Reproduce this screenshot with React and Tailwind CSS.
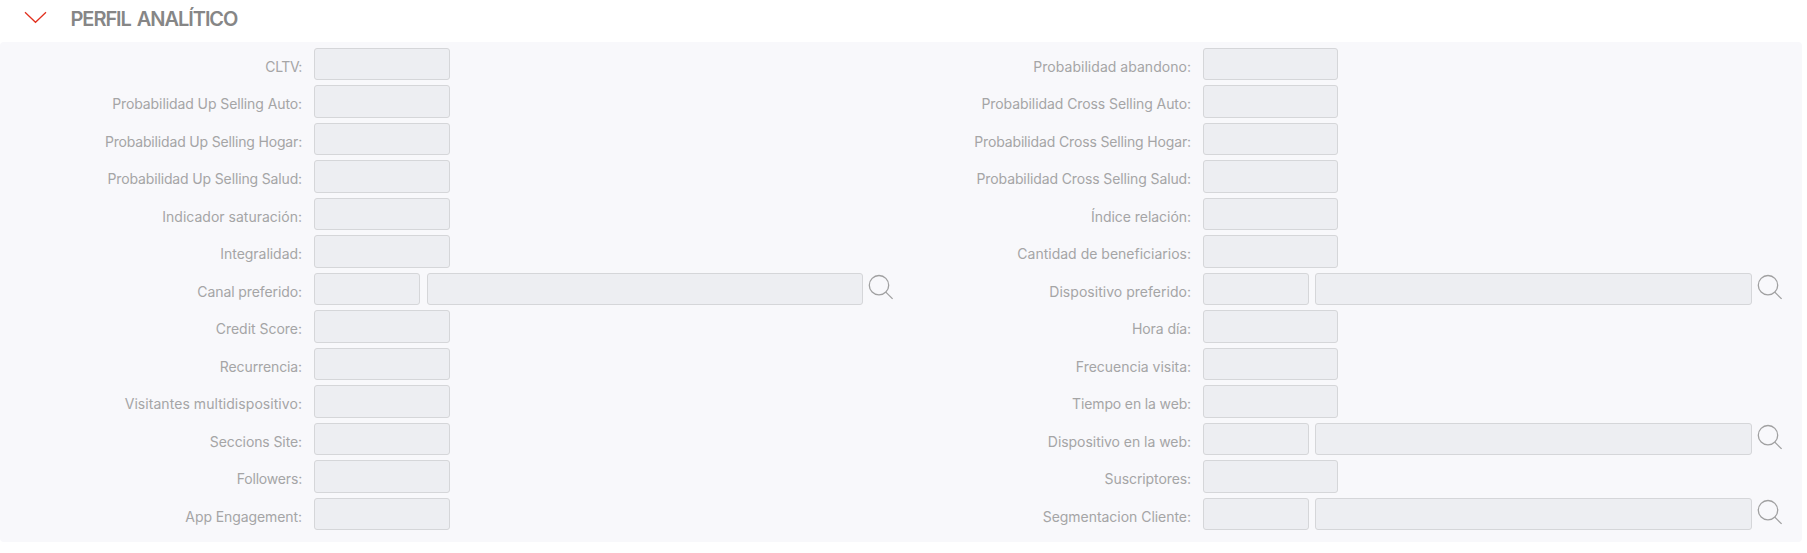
const LEFT = [
  { label: "CLTV:", tracking: "tracking-[-0.4px]" },
  { label: "Probabilidad Up Selling Auto:", tracking: "tracking-[-0.09px]" },
  { label: "Probabilidad Up Selling Hogar:", tracking: "tracking-[-0.17px]" },
  { label: "Probabilidad Up Selling Salud:", tracking: "tracking-[-0.145px]" },
  { label: "Indicador saturación:", tracking: "tracking-[0.01px]" },
  { label: "Integralidad:", tracking: "tracking-[-0.04px]" },
  { label: "Canal preferido:", tracking: "tracking-[-0.093px]", lookup: true },
  { label: "Credit Score:", tracking: "tracking-[-0.02px]" },
  { label: "Recurrencia:", tracking: "tracking-[-0.11px]" },
  { label: "Visitantes multidispositivo:", tracking: "tracking-[0.055px]" },
  { label: "Seccions Site:", tracking: "tracking-[-0.1px]" },
  { label: "Followers:", tracking: "tracking-[-0.18px]" },
  { label: "App Engagement:", tracking: "tracking-[-0.086px]" },
];

const RIGHT = [
  { label: "Probabilidad abandono:", tracking: "tracking-[0.03px]" },
  { label: "Probabilidad Cross Selling Auto:", tracking: "tracking-[-0.075px]" },
  { label: "Probabilidad Cross Selling Hogar:", tracking: "tracking-[-0.15px]" },
  { label: "Probabilidad Cross Selling Salud:", tracking: "tracking-[-0.115px]" },
  { label: "Índice relación:", tracking: "tracking-[-0.04px]" },
  { label: "Cantidad de beneficiarios:", tracking: "tracking-[0px]" },
  { label: "Dispositivo preferido:", tracking: "tracking-[0.025px]", lookup: true },
  { label: "Hora día:", tracking: "tracking-[-0.08px]" },
  { label: "Frecuencia visita:", tracking: "tracking-[-0.02px]" },
  { label: "Tiempo en la web:", tracking: "tracking-[-0.141px]" },
  { label: "Dispositivo en la web:", tracking: "tracking-[-0.04px]", lookup: true },
  { label: "Suscriptores:", tracking: "tracking-[-0.09px]" },
  { label: "Segmentacion Cliente:", tracking: "tracking-[-0.034px]", lookup: true },
];

function Field({ className }) {
  return (
    <input
      disabled
      className={`block h-[32.3px] shrink-0 rounded-[3px] border border-[#d5d6d9] bg-[#edeef2] ${className}`}
    />
  );
}

function SearchIcon() {
  return (
    <svg className="ml-[5px] mt-[1.1px] h-[26px] w-[26px] shrink-0" viewBox="0 0 26 26" fill="none" stroke="#a0a0a1" strokeWidth="1.3">
      <circle cx="11" cy="11.2" r="9.7" />
      <path d="M17.8 18.1 24.6 24.9" />
    </svg>
  );
}

function Row({ label, tracking, lookup, single, small, wide }) {
  return (
    <div className="flex h-[37.5px] items-start">
      <label className={`mt-[9px] w-[302px] shrink-0 whitespace-nowrap text-right text-sm leading-5 text-[#a5a5a6] ${tracking}`}>
        {label}
      </label>
      <div className="ml-[12px] flex items-start">
        {lookup ? (
          <>
            <Field className={small} />
            <Field className={wide} />
            <SearchIcon />
          </>
        ) : (
          <Field className={single} />
        )}
      </div>
    </div>
  );
}

export default function App() {
  return (
    <main className="h-[553px] overflow-hidden bg-white font-['Inter','Liberation_Sans',sans-serif]">
      <header className="flex h-[42px] items-start">
        <svg className="ml-[24px] mt-[11px] h-[13px] w-[23px]" viewBox="0 0 23 13" fill="none" stroke="#e1301e" strokeWidth="1.25">
          <path d="M1 1.3 11.5 11.3 22 1.3" />
        </svg>
        <h1 className="ml-[23.5px] mt-[5px] text-xl leading-7 font-semibold tracking-[-1.05px] text-[#868686] [word-spacing:2px]">
          PERFIL ANALÍTICO
        </h1>
      </header>
      <section className="flex h-[500px] w-[1802px] rounded bg-[#f8f8fb] pt-[5.9px]">
        <div className="w-[889px] shrink-0">
          {LEFT.map((row) => (
            <Row key={row.label} {...row} single="w-[136px]" small="w-[106px]" wide="ml-[7px] w-[436px]" />
          ))}
        </div>
        <div className="w-[889px] shrink-0">
          {RIGHT.map((row) => (
            <Row key={row.label} {...row} single="w-[135px]" small="w-[106px]" wide="ml-[6px] w-[437px]" />
          ))}
        </div>
      </section>
    </main>
  );
}
